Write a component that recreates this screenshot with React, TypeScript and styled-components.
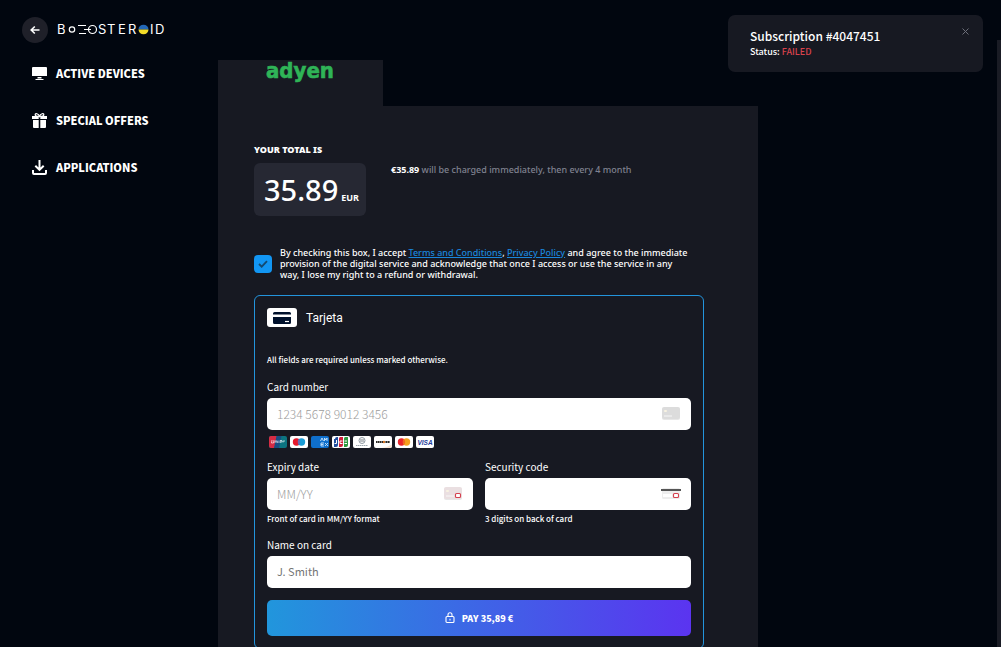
import React from "react";
import styled, { createGlobalStyle, css } from "styled-components";

const sans = `"Noto Sans CJK SC", "Open Sans", sans-serif`;
const display = `"Noto Sans", "Open Sans", sans-serif`;

const GlobalStyle = createGlobalStyle`
  *, *::before, *::after { box-sizing: border-box; }
  body {
    margin: 0;
    background: #01060f;
    color: #ffffff;
    font-family: ${sans};
    font-size: 10px;
  }
  button, input { font-family: inherit; }
`;

const Page = styled.div`
  display: flex;
  flex-direction: column;
  height: 100vh;
  overflow: hidden;
`;

const Header = styled.header`
  display: flex;
  align-items: center;
  gap: 9px;
  flex: none;
  height: 60px;
  padding: 0 22px;
`;

const BackButton = styled.button`
  display: flex;
  align-items: center;
  justify-content: center;
  width: 26px;
  height: 26px;
  padding: 0;
  border: 0;
  border-radius: 50%;
  background: #1f2029;
  color: #ffffff;
`;

const Columns = styled.div`
  display: flex;
  align-items: flex-start;
  flex: 1;
  min-height: 0;
`;

const Sidebar = styled.nav`
  display: flex;
  flex-direction: column;
  gap: 21px;
  flex: none;
  width: 218px;
  padding-left: 32px;
`;

const NavLink = styled.a`
  display: flex;
  align-items: center;
  gap: 9px;
  height: 26px;
  color: #ffffff;
  font-size: 11px;
  font-weight: 900;
  line-height: 16px;
  text-decoration: none;
  svg { flex: none; }
`;

const Main = styled.main`
  flex: 0 1 540px;
  min-width: 0;
`;

const ProviderTab = styled.div`
  width: 165px;
  height: 46px;
  background: #171922;
  text-align: center;
`;

const Panel = styled.section`
  padding: 38px 54px 36px 36px;
  background: #171922;
`;

const Summary = styled.div`
  display: flex;
  gap: 25px;
`;

const TotalBlock = styled.div`
  display: flex;
  flex-direction: column;
  gap: 7px;
  width: 112px;
`;

const TotalTitle = styled.h2`
  margin: 0;
  font-family: ${display};
  font-size: 9px;
  font-weight: 900;
  line-height: 12px;
  white-space: nowrap;
`;

const Price = styled.div`
  display: flex;
  align-items: baseline;
  gap: 3px;
  height: 53px;
  padding-left: 10px;
  border-radius: 6px;
  background: #262833;
  font-family: ${display};
  font-size: 29px;
  font-weight: 500;
  line-height: 53px;
`;

const Currency = styled.span`
  font-size: 9px;
  font-weight: 700;
`;

const Terms = styled.p`
  margin: 18px 0 0;
  color: #7f818f;
  font-family: ${display};
  font-size: 9px;
  font-weight: 500;
  line-height: 15px;
  strong { color: #ffffff; font-weight: 700; }
`;

const Consent = styled.div`
  display: flex;
  align-items: center;
  gap: 8px;
  margin: 31px -8px 15px 0;
`;

const Tick = styled.input`
  width: 18px;
  height: 18px;
  margin: 0;
  appearance: none;
  border-radius: 4px;
  background: #1296f3;
`;

const TickBox = styled.span`
  display: grid;
  flex: none;
  > * { grid-area: 1 / 1; place-self: center; }
  > svg { pointer-events: none; }
`;

const ConsentText = styled.label`
  font-family: ${display};
  font-size: 9px;
  font-weight: 500;
  line-height: 11px;
  a { color: #1a86dc; }
`;

const Card = styled.form`
  padding: 12px;
  border: 1px solid #2394dc;
  border-radius: 6px;
`;

const Method = styled.div`
  display: flex;
  align-items: center;
  gap: 9px;
  height: 19px;
  font-family: Roboto, sans-serif;
  font-size: 12px;
  line-height: 18px;
`;

const MethodIcon = styled.span`
  display: flex;
  align-items: center;
  justify-content: center;
  width: 30px;
  height: 19px;
  border-radius: 3px;
  background: #ffffff;
`;

const Note = styled.p`
  margin: 27px 0 14px;
  font-size: 8px;
  font-weight: 500;
  line-height: 12px;
`;

const Field = styled.div`
  display: flex;
  flex-direction: column;
  min-width: 0;
`;

const FieldLabel = styled.label`
  margin-bottom: 4px;
  font-size: 10px;
  line-height: 14px;
`;

const InputBox = styled.span`
  display: flex;
  align-items: center;
  height: 32px;
  padding: 0 10px;
  border-radius: 5px;
  background: #ffffff;
`;

const Input = styled.input<{ $light?: boolean }>`
  flex: 1;
  min-width: 0;
  height: 32px;
  padding: 0 0 2px;
  border: 0;
  outline: 0;
  background: transparent;
  color: #222222;
  font-size: ${(p) => (p.$light ? "12px" : "11px")};
  &::placeholder {
    color: #757575;
    opacity: 1;
    ${(p) => p.$light && css`color: #9c9c9c; font-weight: 300;`}
  }
`;

const Hint = styled.span`
  margin-top: 3px;
  font-size: 8px;
  font-weight: 500;
  line-height: 12px;
`;

const Brands = styled.div`
  display: flex;
  gap: 3px;
  height: 12px;
  margin: 6px 2px 12px;
`;

const Pair = styled.div`
  display: grid;
  grid-template-columns: 1fr 1fr;
  gap: 12px;
  margin-bottom: 13px;
`;

const PayButton = styled.button`
  display: flex;
  align-items: center;
  justify-content: center;
  gap: 7px;
  width: 100%;
  height: 36px;
  margin-top: 12px;
  border: 0;
  border-radius: 5px;
  background: linear-gradient(90deg, #2196dc, #5b34f0);
  color: #ffffff;
  font-size: 9px;
  font-weight: 900;
`;

const Toast = styled.aside`
  position: fixed;
  top: 15px;
  right: 18px;
  display: flex;
  justify-content: space-between;
  align-items: flex-start;
  width: 255px;
  height: 57px;
  padding: 12px 13px 0 22px;
  border-radius: 7px;
  background: #171922;
`;

const ToastTitle = styled.h3`
  margin: 0;
  font-size: 12px;
  font-weight: 500;
  line-height: 18px;
`;

const ToastStatus = styled.p`
  margin: 0;
  font-size: 9px;
  font-weight: 500;
  line-height: 13px;
  span { color: #d9434d; }
`;

const CloseButton = styled.button`
  display: flex;
  padding: 0;
  border: 0;
  background: transparent;
  color: #6c6e79;
`;

const ScrollTrack = styled.div`
  position: fixed;
  top: 40px;
  right: 0;
  bottom: 0;
  width: 4px;
  background: #1a1c25;
`;

const Wordmark = () => (
  <svg width="110" height="16" viewBox="0 0 110 16" role="img" aria-label="Boosteroid">
    <g fill="#fff" fontFamily="Inter, sans-serif" fontSize="13">
      <text x="0" y="12">B</text>
      <text x="41" y="12">S</text>
      <text x="50" y="12">T</text>
      <text x="61" y="12">E</text>
      <text x="71" y="12">R</text>
      <text x="93" y="12">I</text>
      <text x="98" y="12">D</text>
    </g>
    <g fill="none" stroke="#fff" strokeWidth="1.200">
      <circle cx="15" cy="7.500" r="2.700" />
      <circle cx="35.500" cy="7.500" r="4" />
      <path d="M21 3.500h8M27 7.500h7M22 11.500h7" strokeWidth="1" />
    </g>
    <path d="M81.500 7.500a5 4.800 0 0 1 10 0z" fill="#2367b5" />
    <path d="M81.500 7.500a5 4.800 0 0 0 10 0z" fill="#f3dc28" />
  </svg>
);

const AdyenMark = () => (
  <svg width="72" height="28" viewBox="0 0 72 28" overflow="visible" role="img" aria-label="Adyen">
    <text x="35" y="18" textAnchor="middle" fill="#2fb457" stroke="#2fb457" strokeWidth="0.600"
      fontFamily="'DejaVu Sans Condensed', 'DejaVu Sans', sans-serif" fontWeight="700" fontSize="22">adyen</text>
  </svg>
);

const DevicesIcon = () => (
  <svg width="15" height="15" viewBox="0 0 15 15" fill="#fff">
    <path d="M1 1h13a1 1 0 0 1 1 1v8H0V2a1 1 0 0 1 1-1zM5.500 11h4v1.500h-4zM3.500 13h8v1h-8z" />
  </svg>
);

const GiftIcon = () => (
  <svg width="15" height="15" viewBox="0 0 15 15" fill="#fff">
    <path d="M0 3h6.700v3H0zM8.300 3H15v3H8.300zM1 7h5.700v8H2a1 1 0 0 1-1-1zM8.300 7H14v7a1 1 0 0 1-1 1H8.300z" />
    <path d="M7.500 3.300C6.500.5 3-.2 3.200 2c0 1 1.500 1.300 4.300 1.300C10.300 3.300 11.800 3 11.800 2 12-.2 8.500.5 7.500 3.300z" fill="none" stroke="#fff" strokeWidth="1.200" />
  </svg>
);

const DownloadIcon = () => (
  <svg width="15" height="15" viewBox="0 0 15 15" fill="none" stroke="#fff" strokeWidth="2">
    <path d="M7.500 0v9.500M3.300 5.700l4.200 4.200 4.200-4.200M1 10v3a1 1 0 0 0 1 1h11a1 1 0 0 0 1-1v-3" />
  </svg>
);

const Brand = ({ fill = "#fff", name, children }: { fill?: string; name: string; children: React.ReactNode }) => (
  <svg width="18" height="12" viewBox="0 0 18 12" role="img" aria-label={name}>
    <rect width="18" height="12" rx="2" fill={fill} />
    {children}
  </svg>
);

const BrandRow = () => (
  <Brands>
    <Brand name="UnionPay" fill="#0c7480">
      <path d="M2 0h6L5.500 12H2a2 2 0 0 1-2-2V2a2 2 0 0 1 2-2z" fill="#d52b43" />
      <path d="M7.500 0h5L10 12H5z" fill="#174d83" />
      <path d="M3 4l-.5 3h2L5 4M6 7V5h2v2M9 4.500V7M11 7V4.500h2V6h-2M14 6.500V5h2" stroke="#fff" strokeWidth=".8" fill="none" opacity=".8" />
    </Brand>
    <Brand name="Maestro">
      <circle cx="6.500" cy="6" r="3.700" fill="#e8192c" />
      <circle cx="11.500" cy="6" r="3.700" fill="#189bd5" />
      <path d="M9 3.300a3.700 3.700 0 0 1 0 5.400 3.700 3.700 0 0 1 0-5.400z" fill="#6b6bb5" />
    </Brand>
    <Brand name="American Express" fill="#0f6fcc">
      <path d="M9.500 5L11 2l1.500 3M13.500 5V2l1.300 2L16 2v3M10 10V7h3M10 8.500h2.500M10 10h3M14 7l3 3M17 7l-3 3" stroke="#cde5fa" strokeWidth=".9" fill="none" />
    </Brand>
    <Brand name="JCB">
      <path d="M3 3a2 2 0 0 1 2-2h1v8a2 2 0 0 1-2 2H2V3z" fill="#1f4e9e" />
      <path d="M8 1h3v8a2 2 0 0 1-2 2H7V3a2 2 0 0 1 1-2z" fill="#cf1f3c" />
      <path d="M13 1h3v8a2 2 0 0 1-2 2h-2V3a2 2 0 0 1 1-2z" fill="#2b9a3e" />
      <path d="M4.500 4v3.500H2.500M10.500 5H8v2.500h2.500M12.500 5h2.500M12.500 7.500h2.500" stroke="#fff" strokeWidth="1" fill="none" />
    </Brand>
    <Brand name="Diners Club">
      <circle cx="9" cy="4.500" r="3" fill="none" stroke="#74808b" strokeWidth=".8" />
      <path d="M8 3v3M10 3v3" stroke="#59636d" strokeWidth=".8" />
      <path d="M3 9.500h12" stroke="#9ba4ac" strokeWidth="1" strokeDasharray="1.500 .5" />
    </Brand>
    <Brand name="Discover">
      <path d="M2 6h14" stroke="#2b2926" strokeWidth="1.800" strokeDasharray="1.600 .4" />
      <circle cx="10" cy="6" r="1.200" fill="#d8792c" />
      <path d="M7 12c5-.5 8-2 11-3.500V10a2 2 0 0 1-2 2z" fill="#f9e5d4" />
    </Brand>
    <Brand name="Mastercard">
      <circle cx="6.500" cy="6" r="3.700" fill="#e9252c" />
      <circle cx="11.500" cy="6" r="3.700" fill="#f5a01d" />
      <path d="M9 3.300a3.700 3.700 0 0 1 0 5.400 3.700 3.700 0 0 1 0-5.400z" fill="#f16522" />
    </Brand>
    <Brand name="Visa">
      <text x="9" y="8.500" textAnchor="middle" fontFamily="'Liberation Sans', sans-serif" fontWeight="700" fontStyle="italic" fontSize="6.500" fill="#1c3a9c">VISA</text>
    </Brand>
  </Brands>
);

const CardHint = ({ kind }: { kind: "number" | "expiry" | "code" }) => (
  <svg width="20" height="16" viewBox="0 0 20 16" aria-hidden="true">
    {kind === "code" ? (
      <>
        <rect x="1" y="2" width="18" height="11" rx="1.500" fill="#eeeeee" />
        <path d="M0 3h20v2H0z" fill="#555" />
        <path d="M2 8h9v3H2z" fill="#fff" />
      </>
    ) : (
      <>
        <rect x="1" y="2" width="18" height="12" rx="2" fill="#cfcfcf" opacity=".5" />
        <rect x="1" y="1" width="18" height="12" rx="2" fill={kind === "expiry" ? "#eadfe1" : "#dcdcdc"} />
        <rect x="3" y="4" width="3" height="2" rx="1" fill="#f8f3e2" />
        <path d="M3 10h8" stroke="#f7f7f7" />
      </>
    )}
    {kind !== "number" && <rect x="12.500" y="7.500" width="5" height="4" rx="1" fill="#fff" stroke="#d5404f" strokeWidth="1.100" />}
  </svg>
);

export default function App() {
  return (
    <Page>
      <GlobalStyle />
      <Header>
        <BackButton aria-label="Back">
          <svg width="10" height="10" viewBox="0 0 10 10" fill="none" stroke="currentColor" strokeWidth="1.600">
            <path d="M9.500 5H1.500M4.800 1.500L1.200 5l3.600 3.500" />
          </svg>
        </BackButton>
        <Wordmark />
      </Header>
      <Columns>
        <Sidebar>
          <NavLink href="#devices"><DevicesIcon />ACTIVE DEVICES</NavLink>
          <NavLink href="#offers"><GiftIcon />SPECIAL OFFERS</NavLink>
          <NavLink href="#applications"><DownloadIcon />APPLICATIONS</NavLink>
        </Sidebar>
        <Main>
          <ProviderTab><AdyenMark /></ProviderTab>
          <Panel>
            <Summary>
              <TotalBlock>
                <TotalTitle>YOUR TOTAL IS</TotalTitle>
                <Price>35.89<Currency>EUR</Currency></Price>
              </TotalBlock>
              <Terms><strong>€35.89</strong> will be charged immediately, then every 4 month</Terms>
            </Summary>
            <Consent>
              <TickBox>
                <Tick type="checkbox" id="consent" defaultChecked />
                <svg width="10" height="8" viewBox="0 0 10 8" fill="none" stroke="#14496f" strokeWidth="1.800">
                  <path d="M1 4l2.700 2.700L9 1.200" />
                </svg>
              </TickBox>
              <ConsentText htmlFor="consent">
                By checking this box, I accept <a href="#terms">Terms and Conditions</a>, <a href="#privacy">Privacy Policy</a> and agree to the immediate<br />
                provision of the digital service and acknowledge that once I access or use the service in any<br />
                way, I lose my right to a refund or withdrawal.
              </ConsentText>
            </Consent>
            <Card onSubmit={(e) => e.preventDefault()}>
              <Method>
                <MethodIcon>
                  <svg width="18" height="12" viewBox="0 0 18 12">
                    <path d="M1.500 0h15A1.500 1.500 0 0 1 18 1.500V2.500H0v-1A1.500 1.500 0 0 1 1.500 0zM0 5h18v5.500a1.500 1.500 0 0 1-1.500 1.500h-15A1.500 1.500 0 0 1 0 10.500z" fill="#00112c" />
                    <path d="M12 9.500h4" stroke="#fff" strokeWidth="1.200" />
                  </svg>
                </MethodIcon>
                Tarjeta
              </Method>
              <Note>All fields are required unless marked otherwise.</Note>
              <Field>
                <FieldLabel htmlFor="number">Card number</FieldLabel>
                <InputBox><Input $light id="number" placeholder="1234 5678 9012 3456" /><CardHint kind="number" /></InputBox>
              </Field>
              <BrandRow />
              <Pair>
                <Field>
                  <FieldLabel htmlFor="expiry">Expiry date</FieldLabel>
                  <InputBox><Input $light id="expiry" placeholder="MM/YY" /><CardHint kind="expiry" /></InputBox>
                  <Hint>Front of card in MM/YY format</Hint>
                </Field>
                <Field>
                  <FieldLabel htmlFor="code">Security code</FieldLabel>
                  <InputBox><Input $light id="code" /><CardHint kind="code" /></InputBox>
                  <Hint>3 digits on back of card</Hint>
                </Field>
              </Pair>
              <Field>
                <FieldLabel htmlFor="name">Name on card</FieldLabel>
                <InputBox><Input id="name" placeholder="J. Smith" /></InputBox>
              </Field>
              <PayButton type="submit">
                <svg width="10" height="12" viewBox="0 0 10 12" fill="none" stroke="#fff" strokeWidth="1.100">
                  <rect x="1" y="4.500" width="8" height="6" rx="1" />
                  <path d="M3 4.500V2.800a2 2 0 0 1 4 0v1.700M5 6.800v1.600" />
                </svg>
                PAY 35,89 €
              </PayButton>
            </Card>
          </Panel>
        </Main>
      </Columns>
      <Toast role="status">
        <div>
          <ToastTitle>Subscription #4047451</ToastTitle>
          <ToastStatus>Status: <span>FAILED</span></ToastStatus>
        </div>
        <CloseButton aria-label="Close">
          <svg width="9" height="9" viewBox="0 0 9 9" fill="none" stroke="currentColor">
            <path d="M1.500 1.500l6 6M7.500 1.500l-6 6" />
          </svg>
        </CloseButton>
      </Toast>
      <ScrollTrack />
    </Page>
  );
}
